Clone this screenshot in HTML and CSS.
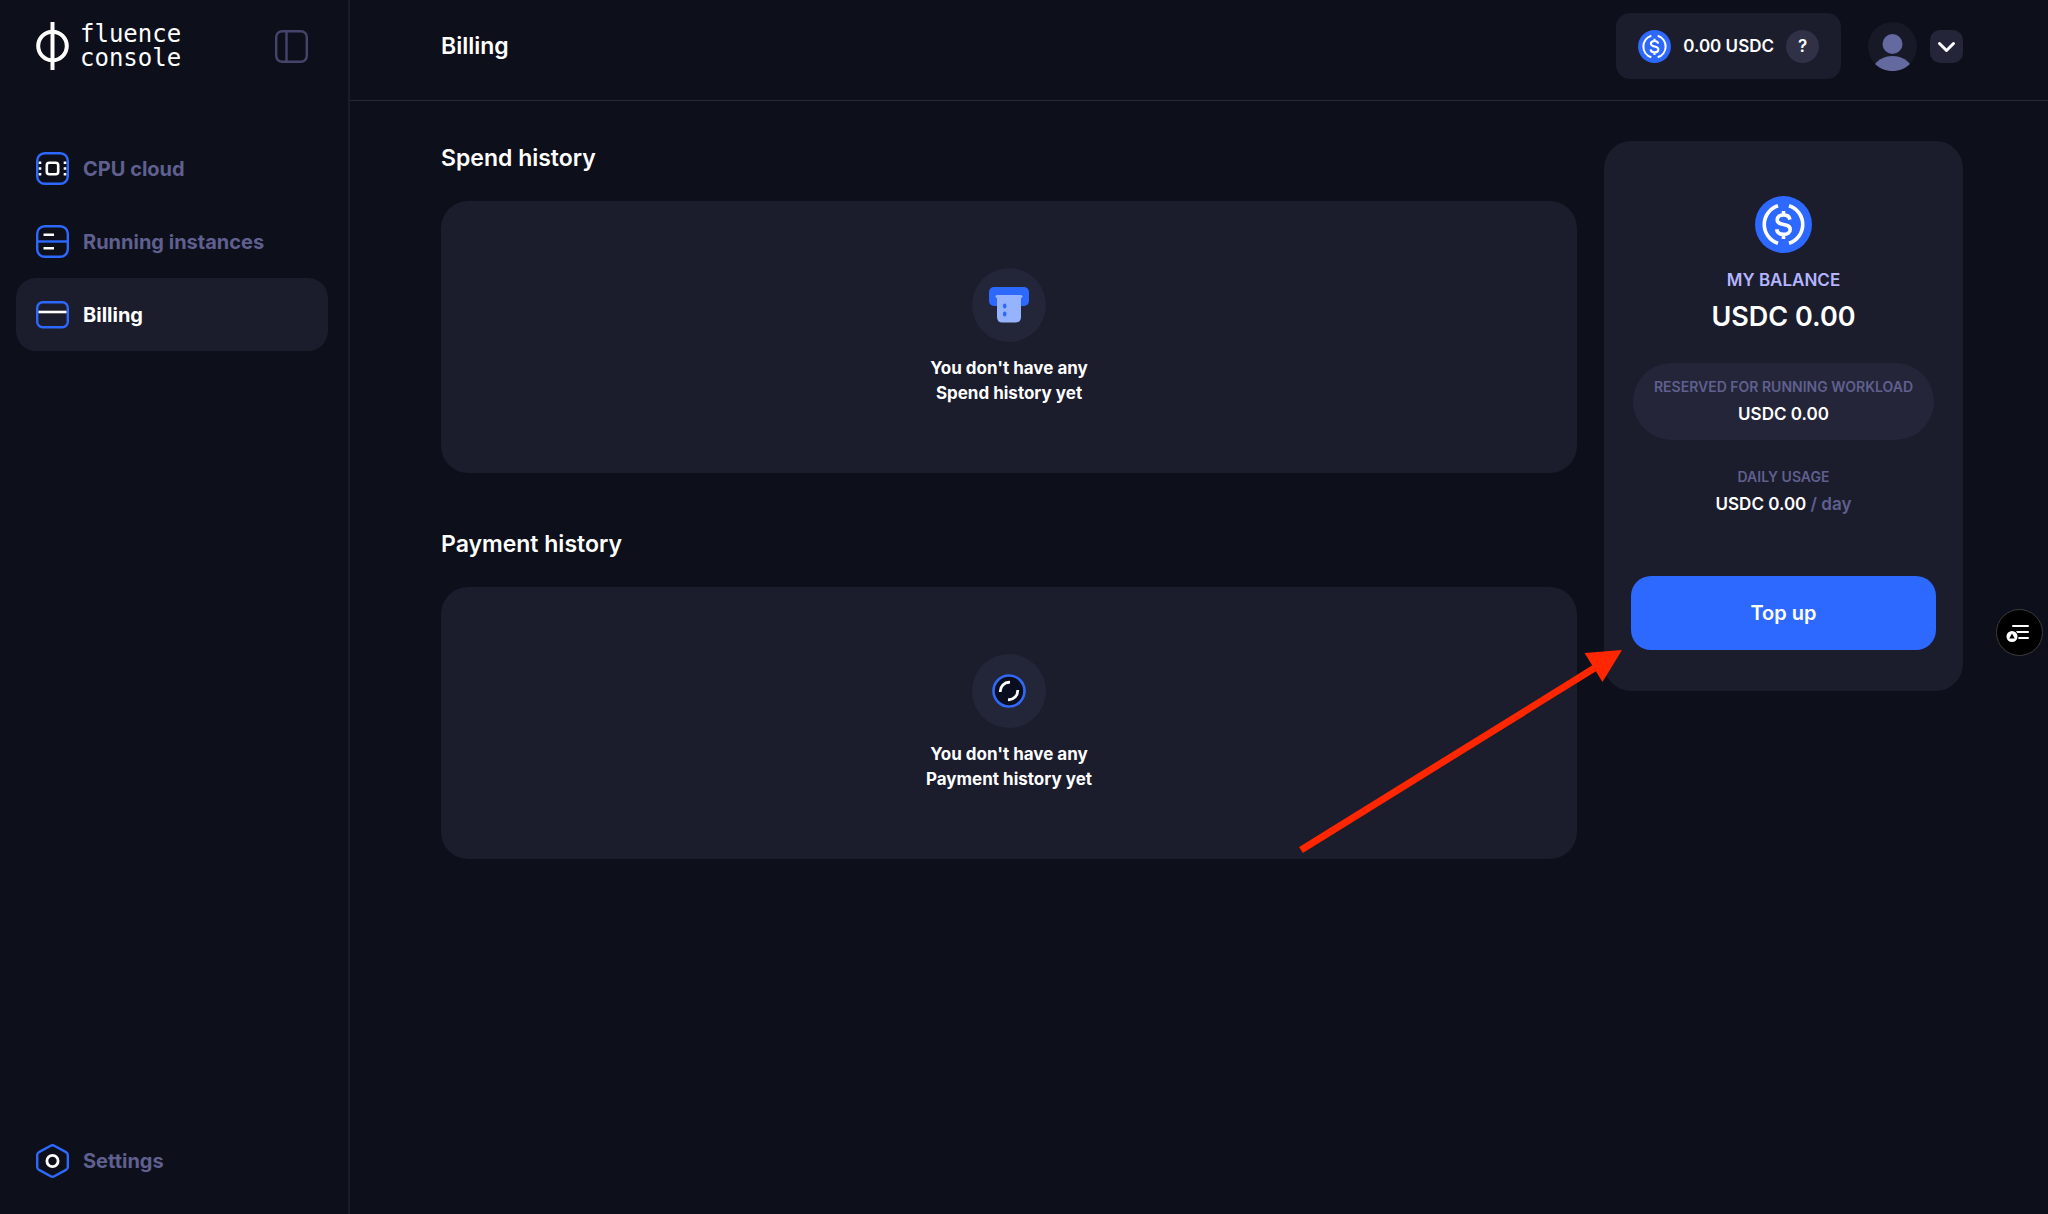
FILE: index.html
```
<!DOCTYPE html>
<html lang="en">
<head>
    <meta charset="UTF-8">
    <meta name="viewport" content="width=device-width, initial-scale=1.0">
    <title>Billing — Fluence Console</title>
    <link rel="stylesheet" href="styles.css">
</head>
<body>

<!-- shared coin icon -->
<svg class="defs" width="0" height="0" aria-hidden="true">
    <symbol id="coin" viewBox="0 0 57 57">
        <circle cx="28.5" cy="28.5" r="28.5" fill="#2d69ff"/>
        <g fill="none" stroke="#fff" stroke-width="3.6">
            <path d="M23 9.8a19.6 19.6 0 0 0 0 37.4M34 9.8a19.6 19.6 0 0 1 0 37.4"/>
            <path d="M34.9 23.6c-.5-3-2.8-4.7-6.4-4.7-3.8 0-6.3 1.9-6.3 4.8 0 6.9 13 2.5 13 9.8 0 3-2.6 4.9-6.6 4.9-4 0-6.5-1.8-6.9-5.1M28.5 15v5M28.5 37v6"/>
        </g>
    </symbol>
</svg>

<div class="layout">
    <aside class="sidebar">
        <div class="brand">
            <a class="logo" href="#">
                <svg width="33" height="48" viewBox="0 0 33 48" fill="none" stroke="#fff" stroke-width="4">
                    <circle cx="16.5" cy="24" r="14.3"/>
                    <path d="M16.5 0v48"/>
                </svg>
                <span>fluence<br>console</span>
            </a>
            <button class="collapse" type="button" aria-label="Collapse sidebar">
                <svg width="33" height="33" viewBox="0 0 33 33" fill="none" stroke="#45456b" stroke-width="2.4">
                    <rect x="1.2" y="1.2" width="30.6" height="30.6" rx="6"/>
                    <path d="M11.5 1v31"/>
                </svg>
            </button>
        </div>

        <nav class="nav">
            <a class="nav-item" href="#">
                <svg width="33" height="33" viewBox="0 0 33 33" fill="none">
                    <rect x="1.2" y="1.2" width="30.6" height="30.6" rx="7.5" stroke="#2d69ff" stroke-width="2.4"/>
                    <rect x="10.8" y="10.8" width="11.4" height="11.4" rx="2.5" stroke="#fff" stroke-width="2.6"/>
                    <path d="M4 9.4v14.2M29 9.4v14.2" stroke="#fff" stroke-width="2.6" stroke-dasharray="2.6 3.2"/>
                </svg>
                CPU cloud
            </a>
            <a class="nav-item" href="#">
                <svg width="33" height="33" viewBox="0 0 33 33" fill="none">
                    <rect x="1.2" y="1.2" width="30.6" height="30.6" rx="7.5" stroke="#2d69ff" stroke-width="2.4"/>
                    <path d="M1 16.5h31" stroke="#2d69ff" stroke-width="2.4"/>
                    <path d="M7.5 9.8h10.5M7.5 23.3h10.5" stroke="#fff" stroke-width="2.6"/>
                </svg>
                Running instances
            </a>
            <a class="nav-item active" href="#" aria-current="page">
                <svg width="33" height="33" viewBox="0 0 33 33" fill="none">
                    <rect x="1.2" y="4.2" width="30.6" height="25" rx="5.5" stroke="#2d69ff" stroke-width="2.4"/>
                    <path d="M2.5 14h28" stroke="#fff" stroke-width="2.6"/>
                </svg>
                Billing
            </a>
        </nav>

        <a class="nav-item settings" href="#">
            <svg width="33" height="34" viewBox="0 0 33 34" fill="none">
                <path d="M14.7 1.7q1.8-1 3.6 0L30 8.1q1.8 1 1.8 3v11.8q0 2-1.8 3L18.3 32.3q-1.8 1-3.6 0L3 25.9q-1.8-1-1.8-3V11.1q0-2 1.8-3z" stroke="#2d69ff" stroke-width="2.4"/>
                <circle cx="16.5" cy="17" r="5.6" stroke="#fff" stroke-width="2.8"/>
            </svg>
            Settings
        </a>
    </aside>

    <div class="page">
        <header class="topbar">
            <h1>Billing</h1>
            <div class="account">
                <div class="wallet">
                    <svg width="33" height="33"><use href="#coin"/></svg>
                    <span>0.00 USDC</span>
                    <button class="help" type="button" aria-label="Help">?</button>
                </div>
                <svg class="avatar" width="49" height="49" viewBox="0 0 49 49">
                    <circle cx="24.5" cy="24.5" r="24.5" fill="#171926"/>
                    <circle cx="24.5" cy="22" r="10" fill="#6469a0"/>
                    <path d="M7 42C11 37 17 34 24.5 34s13.5 3 17.5 8c-4.5 4.5-11 7-17.5 7S11.5 46.5 7 42z" fill="#6469a0"/>
                </svg>
                <button class="dropdown" type="button" aria-label="Account menu">
                    <svg width="33" height="33" viewBox="0 0 33 33" fill="none" stroke="#fff" stroke-width="3" stroke-linecap="round" stroke-linejoin="round">
                        <path d="M9.5 13.5l7 7 7-7"/>
                    </svg>
                </button>
            </div>
        </header>

        <main class="content">
            <div class="history">
                <section>
                    <h2>Spend history</h2>
                    <div class="empty">
                        <div class="empty-icon">
                            <svg width="40" height="36" viewBox="0 0 40 36">
                                <rect width="40" height="19" rx="5" fill="#2d69ff"/>
                                <rect x="6.5" y="8" width="27" height="3" rx="1.5" fill="#96b3ff"/>
                                <path d="M8 9h24v21q0 5.5-5.5 5.5h-13Q8 35.5 8 30z" fill="#96b3ff"/>
                                <rect x="14" y="16.5" width="3.4" height="5" rx="1.7" fill="#2d69ff"/>
                                <rect x="14" y="24.5" width="3.4" height="5" rx="1.7" fill="#2d69ff"/>
                            </svg>
                        </div>
                        <p>You don't have any<br>Spend history yet</p>
                    </div>
                </section>

                <section>
                    <h2>Payment history</h2>
                    <div class="empty">
                        <div class="empty-icon">
                            <svg width="34" height="34" viewBox="0 0 34 34" fill="none">
                                <circle cx="17" cy="17" r="15.5" fill="#0a0d1e" stroke="#3069f5" stroke-width="2.6"/>
                                <path d="M8.3 18a9 9 0 0 1 9.7-9.7M25.7 16a9 9 0 0 1-9.7 9.7" stroke="#fff" stroke-width="2.8"/>
                            </svg>
                        </div>
                        <p>You don't have any<br>Payment history yet</p>
                    </div>
                </section>
            </div>

            <aside class="balance">
                <svg width="57" height="57"><use href="#coin"/></svg>
                <div class="balance-label">MY BALANCE</div>
                <div class="balance-total">USDC 0.00</div>
                <div class="stat reserved">
                    <span class="stat-label">RESERVED FOR RUNNING WORKLOAD</span>
                    <span class="stat-value">USDC 0.00</span>
                </div>
                <div class="stat">
                    <span class="stat-label">DAILY USAGE</span>
                    <span class="stat-value">USDC 0.00 <span class="unit">/ day</span></span>
                </div>
                <div class="topup">
                    <button type="button">Top up</button>
                    <svg class="arrow" width="324" height="205" viewBox="0 0 324 205">
                        <path d="M3 200L299 16.5" stroke="#ff2600" stroke-width="7"/>
                        <path d="M324 0l-37.5 3 18 29z" fill="#ff2600"/>
                    </svg>
                </div>
            </aside>
        </main>
    </div>
</div>

<button class="widget" type="button" aria-label="Page tools">
    <svg width="24" height="18" viewBox="0 0 24 18">
        <path d="M7 2h15M11 8h11M13 14h9" stroke="#fff" stroke-width="2" stroke-linecap="round"/>
        <circle cx="6" cy="12.5" r="6.5" fill="#000"/>
        <circle cx="6" cy="12.5" r="5.5" fill="#fff"/>
        <path d="M6 9.5l2.8 5H3.2z" fill="#000"/>
    </svg>
</button>

</body>
</html>
```
FILE: styles.css
```
* { box-sizing: border-box; }
body {
    margin: 0;
    background: #0d0f1a;
    color: #fff;
    font-family: Inter, 'Open Sans', sans-serif;
    font-weight: 600;
}
a { color: inherit; text-decoration: none; }
button {
    border: 0;
    padding: 0;
    color: inherit;
    font: inherit;
    cursor: pointer;
}
svg { display: block; flex-shrink: 0; }
h1, h2, p { margin: 0; }
h1, h2 { font-size: 23px; font-weight: 600; line-height: 32px; }
.defs { position: absolute; }

.layout { display: flex; min-height: 100vh; }

/* sidebar */
.sidebar {
    display: flex;
    flex-direction: column;
    width: 350px;
    flex-shrink: 0;
    padding: 22px 20px 17px 16px;
    border-right: 2px solid #1b1c2b;
}
.brand {
    display: flex;
    justify-content: space-between;
    align-items: center;
    padding: 0 20px;
}
.logo {
    display: flex;
    align-items: center;
    gap: 11px;
    font: 400 24px/24px 'DejaVu Sans Mono', monospace;
}
.collapse { background: none; }
.nav { margin-top: 62px; }
.nav-item {
    display: flex;
    align-items: center;
    gap: 14px;
    height: 73px;
    padding: 0 20px;
    border-radius: 20px;
    color: #5f608f;
    font-size: 20px;
    font-weight: 700;
}
.nav-item.active { background: #1b1c2c; color: #fff; }
.settings { margin-top: auto; }

/* top bar */
.page { flex: 1; min-width: 0; }
.topbar {
    display: flex;
    justify-content: space-between;
    align-items: center;
    padding: 13px 85px 21px 91px;
    border-bottom: 1px solid #272938;
}
.account { display: flex; align-items: center; }
.wallet {
    display: flex;
    align-items: center;
    gap: 12px;
    height: 66px;
    padding: 0 22px;
    border-radius: 14px;
    background: #1b1c2c;
    font-size: 17px;
}
.help {
    width: 33px;
    height: 33px;
    border-radius: 50%;
    background: #303147;
}
.avatar { margin: 0 13px 0 27px; }
.dropdown { border-radius: 10px; background: #242538; }

/* content */
.content {
    display: flex;
    align-items: flex-start;
    gap: 27px;
    padding: 40px 85px 40px 91px;
}
.history {
    display: flex;
    flex-direction: column;
    flex: 1;
    gap: 54px;
}
.history h2 { margin: 1px 0 27px; }
.empty {
    display: flex;
    flex-direction: column;
    align-items: center;
    gap: 14px;
    padding: 67px 20px;
    border-radius: 27px;
    background: #1b1c2c;
    font-size: 17px;
    font-weight: 700;
    line-height: 25px;
    text-align: center;
}
.empty-icon {
    display: flex;
    align-items: center;
    justify-content: center;
    width: 74px;
    height: 74px;
    border-radius: 50%;
    background: #232538;
}

/* balance card */
.balance {
    display: flex;
    flex-direction: column;
    align-items: center;
    width: 359px;
    flex-shrink: 0;
    padding: 55px 27px 41px;
    border-radius: 27px;
    background: #1b1c2c;
}
.balance-label {
    margin-top: 15px;
    color: #b4b5ff;
    font-size: 17px;
    line-height: 24px;
}
.balance-total {
    margin: 7px 0 28px;
    font-size: 27px;
    line-height: 36px;
}
.stat {
    display: flex;
    flex-direction: column;
    align-items: center;
    gap: 6px;
    padding: 14px 21px;
}
.reserved {
    margin-bottom: 13px;
    border-radius: 39px;
    background: #242538;
}
.stat-label { color: #5f608f; font-size: 14px; line-height: 19px; }
.stat-value { font-size: 17px; line-height: 24px; }
.unit { color: #5f608f; }
.topup {
    position: relative;
    width: 100%;
    margin-top: 46px;
}
.topup button {
    width: 100%;
    height: 74px;
    border-radius: 20px;
    background: #2d69ff;
    font-size: 20px;
}
.arrow {
    position: absolute;
    top: 100%;
    right: calc(100% + 9px);
}

.widget {
    position: fixed;
    top: 609px;
    right: 5px;
    display: flex;
    align-items: center;
    width: 47px;
    height: 47px;
    padding-left: 9px;
    border: 1px solid #3c3c3c;
    border-radius: 50%;
    background: #000;
}
```
